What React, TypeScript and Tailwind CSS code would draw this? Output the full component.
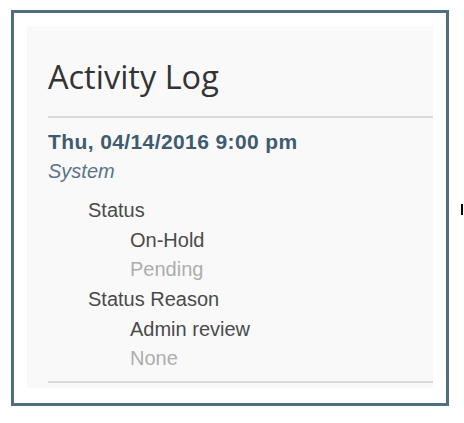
const rows = [
    { label: 'Status', next: 'On-Hold', prev: 'Pending' },
    { label: 'Status Reason', next: 'Admin review', prev: 'None' },
];

const App = () => {
    return (
        <div className="flex items-start bg-white w-[464px] h-[423px] pt-[10px] pl-[11px]">
            <div className="w-[438px] h-[396px] border-[3px] border-[#4e6e84] pl-[13px] pt-[13px]">
                <div className="w-[406px] h-[362px] bg-[#f9f9f9] pl-[21px] pt-[31px]">
                    <h2 className="font-['Open_Sans',sans-serif] text-[32.5px] leading-[40px] text-[#333]">Activity Log</h2>
                    <div className="mt-[19px] h-[2px] bg-[#dadada]" />
                    <div className="mt-[9px] font-['Liberation_Sans',Arial,sans-serif] leading-[29.6px]">
                        <div className="text-[21px] font-bold text-[#3f5b70] tracking-[0.4px]">Thu, 04/14/2016 9:00 pm</div>
                        <div className="text-[20px] italic text-[#5b7488]">System</div>
                        <div className="mt-[10px] pl-[40px] text-[20px]">
                            {rows.map((row) => (
                                <div key={row.label}>
                                    <div className="text-[#4a4a4a]">{row.label}</div>
                                    <div className="pl-[42px] text-[#4a4a4a]">{row.next}</div>
                                    <div className="pl-[42px] text-[#adadad]">{row.prev}</div>
                                </div>
                            ))}
                        </div>
                    </div>
                    <div className="mt-[7px] h-[2px] bg-[#dadada]" />
                </div>
            </div>
            <div className="ml-[12px] mt-[194px] w-[2px] h-[11px] bg-black" />
        </div>
    );
};

export default App;
